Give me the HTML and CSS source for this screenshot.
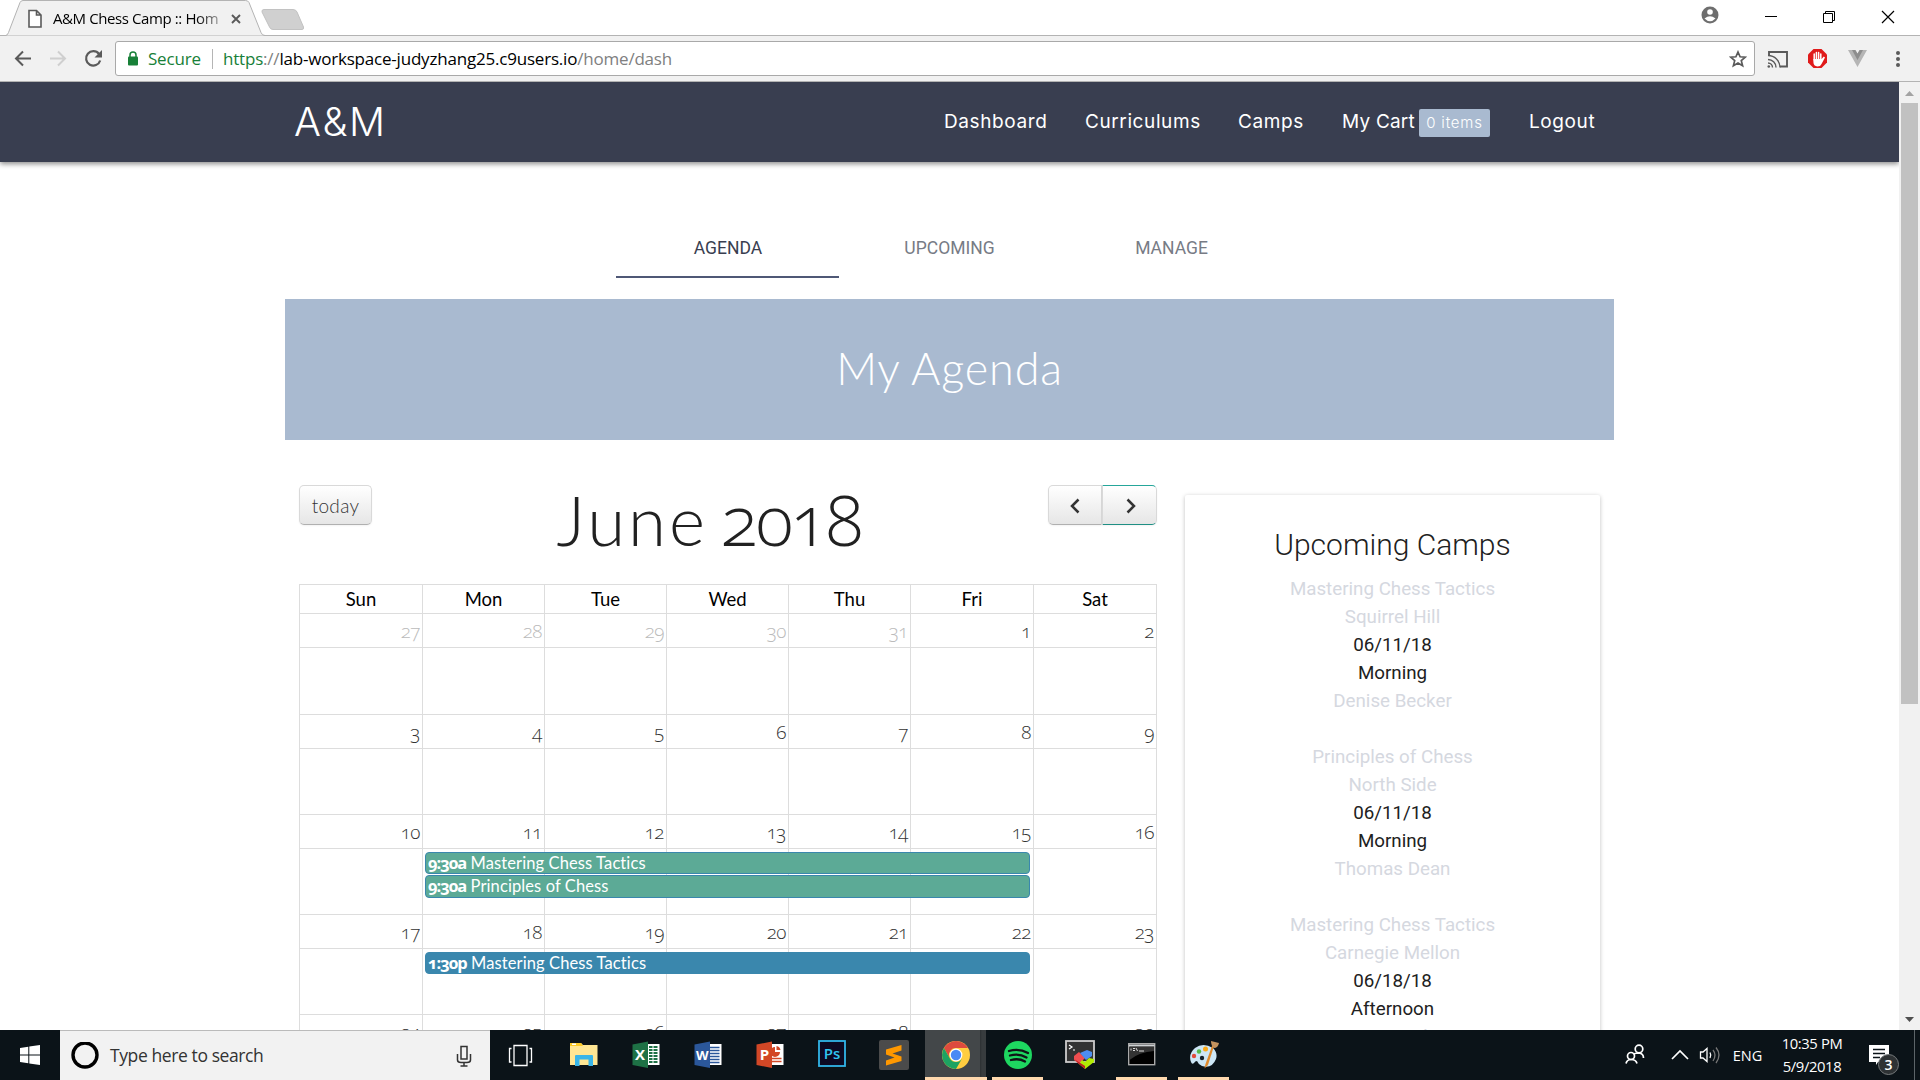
FILE: index.html
```html
<!DOCTYPE html>
<html lang="en">
<head>
<meta charset="utf-8">
<title>A&amp;M Chess Camp :: Home</title>
<link rel="stylesheet" href="styles.css">
</head>
<body>
<header class="tabstrip">
  <svg class="tabs-art" width="320" height="36" viewBox="0 0 320 36">
    <path d="M0 35.5H5.500Q7.500 35.500 8.500 32.500L20 2.500Q21 .5 23 .5H245.500Q248 .5 249 2.500L261 32.500Q262 35.500 265 35.500H320" fill="#f1f1f1" stroke="#b3b3b3"/>
    <path d="M264 9.500H293Q296 9.500 297 12L303.500 27Q304 29.500 302 29.500H273Q270.500 29.500 269.500 27L262 12Q261.500 9.500 264 9.500Z" fill="#d0d0d0" stroke="#c2c2c2"/>
    <path d="M29 10.500H36.500L41 15V27H29ZM36.500 10.500V15H41" fill="#fff" stroke="#5a5a5a" stroke-width="1.600"/>
    <path d="M232 15L240 23M240 15L232 23" stroke="#5a5a5a" stroke-width="1.900"/>
  </svg>
  <span class="tab-title">A&amp;M Chess Camp :: Hom</span>
  <svg class="window-buttons" width="220" height="35" viewBox="0 0 220 35">
    <circle cx="10" cy="15" r="8.500" fill="#6e6e6e"/><circle cx="10" cy="12" r="2.800" fill="#fff"/><path d="M4.500 18.500Q10 14 15.500 18.500Q10 24 4.500 18.500Z" fill="#fff"/>
    <path d="M65 16.500H77" stroke="#000"/>
    <path d="M123.500 13.500H132.500V22.500H123.500ZM125.500 13.500V11.500H134.500V20.500H132.500" fill="none" stroke="#000"/>
    <path d="M182 11L194 23M194 11L182 23" stroke="#000" stroke-width="1.200"/>
  </svg>
</header>
<div class="toolbar">
  <svg class="nav-icons" width="115" height="45" viewBox="0 0 115 45">
    <path d="M31 22.500H16M23 15.500L16 22.500L23 29.500" fill="none" stroke="#5a5a5a" stroke-width="2"/>
    <path d="M50 22.500H65M58 15.500L65 22.500L58 29.500" fill="none" stroke="#cfcfcf" stroke-width="2"/>
    <path d="M99 18A7.200 7.200 0 1 0 100.200 24.500" fill="none" stroke="#5a5a5a" stroke-width="2.200"/><path d="M102 14V21.500H94.500Z" fill="#5a5a5a"/>
  </svg>
  <div class="address">
    <svg width="12" height="15" viewBox="0 0 12 15"><rect x="1" y="5.500" width="10" height="9" rx="1" fill="#188038"/><path d="M3 7V4A3 3 0 0 1 9 4V7" fill="none" stroke="#188038" stroke-width="1.500"/></svg>
    <span class="secure">Secure</span><span class="sep"></span>
    <span class="url"><span class="scheme">https</span>://<span class="host">lab-workspace-judyzhang25.c9users.io</span>/home/dash</span>
    <svg class="star" width="18" height="18" viewBox="0 0 18 18"><path d="M9 2L11.100 6.800L16.300 7.200L12.300 10.600L13.600 15.800L9 13L4.400 15.800L5.700 10.600L1.700 7.200L6.900 6.800Z" fill="none" stroke="#5a5a5a" stroke-width="1.700"/></svg>
  </div>
  <svg class="extensions" width="165" height="45" viewBox="1755 36 165 45">
    <path d="M1769 56V52H1787V66.500H1780" fill="none" stroke="#5a5a5a" stroke-width="1.900"/>
    <path d="M1768 59.500A8 8 0 0 1 1776 67.500M1768 63A4.500 4.500 0 0 1 1772.500 67.500M1768 55.500A12 12 0 0 1 1780 67.500" fill="none" stroke="#5a5a5a" stroke-width="1.400"/><circle cx="1768.800" cy="66.500" r="1.300" fill="#5a5a5a"/>
    <path d="M1813.500 49H1821.500L1827 54.500V62.500L1821.500 68H1813.500L1808 62.500V54.500Z" fill="#e01b1b"/>
    <path d="M1814.200 60V54M1816.400 60V52.500M1818.600 60V52.500M1820.800 60V54" stroke="#fff" stroke-width="1.500" stroke-linecap="round"/><path d="M1813.400 59H1821.600L1823.800 56.500L1825 57.500L1821.500 64Q1820.500 66.500 1817.500 66.500Q1813.400 66 1813.400 62Z" fill="#fff"/>
    <path d="M1848 50H1854L1857.500 56L1861 50H1867L1857.500 67Z" fill="#b5b5b5"/><path d="M1852 50H1855.500L1857.500 53.500L1859.500 50H1863L1857.500 60Z" fill="#8d8d8d"/>
    <circle cx="1898" cy="53" r="2" fill="#5a5a5a"/><circle cx="1898" cy="59" r="2" fill="#5a5a5a"/><circle cx="1898" cy="65" r="2" fill="#5a5a5a"/>
  </svg>
</div>
<div class="viewport">
  <div class="page">
    <nav class="navbar">
      <a class="brand">A&amp;M</a>
      <div class="links"><a class="l1">Dashboard</a><a class="l2">Curriculums</a><a class="l3">Camps</a><a class="l4">My Cart</a><span class="badge">0 items</span><a class="l5">Logout</a></div>
    </nav>
    <div class="tabs"><a class="active">AGENDA</a><a>UPCOMING</a><a>MANAGE</a></div>
    <h2 class="banner">My Agenda</h2>
    <main class="main">
      <section class="calendar">
        <div class="cal-head">
          <button class="btn today">today</button>
          <h1>June <span class="year">2018</span></h1>
          <div class="pager">
            <button class="btn prev"><svg width="12" height="16" viewBox="0 0 12 16"><path d="M9.500 1.500L3 8L9.500 14.500" fill="none" stroke="#333" stroke-width="2.500"/></svg></button><button class="btn next"><svg width="12" height="16" viewBox="0 0 12 16"><path d="M2.500 1.500L9 8L2.500 14.500" fill="none" stroke="#333" stroke-width="2.500"/></svg></button>
          </div>
        </div>
        <div class="grid">
          <div class="days"><b>Sun</b><b>Mon</b><b>Tue</b><b>Wed</b><b>Thu</b><b>Fri</b><b>Sat</b></div>
          <div class="week first"><i class="out">27</i><i class="out">28</i><i class="out">29</i><i class="out">30</i><i class="out">31</i><i>1</i><i>2</i><s></s><s></s><s></s><s></s><s></s><s></s><s></s></div>
          <div class="week"><i>3</i><i>4</i><i>5</i><i>6</i><i>7</i><i>8</i><i>9</i><s></s><s></s><s></s><s></s><s></s><s></s><s></s></div>
          <div class="week"><i>10</i><i>11</i><i>12</i><i>13</i><i>14</i><i>15</i><i>16</i><s></s><s></s><s></s><s></s><s></s><s></s><s></s>
            <div class="events"><p class="green"><b>9:30a</b> Mastering Chess Tactics</p><p class="green"><b>9:30a</b> Principles of Chess</p></div></div>
          <div class="week"><i>17</i><i>18</i><i>19</i><i>20</i><i>21</i><i>22</i><i>23</i><s></s><s></s><s></s><s></s><s></s><s></s><s></s>
            <div class="events"><p><b>1:30p</b> Mastering Chess Tactics</p></div></div>
          <div class="week"><i>24</i><i>25</i><i>26</i><i>27</i><i>28</i><i>29</i><i>30</i><s></s><s></s><s></s><s></s><s></s><s></s><s></s></div>
        </div>
      </section>
      <aside class="card">
        <h3>Upcoming Camps</h3>
        <div class="camp"><a>Mastering Chess Tactics</a><a>Squirrel Hill</a><span>06/11/18</span><span>Morning</span><a>Denise Becker</a></div>
        <div class="camp"><a>Principles of Chess</a><a>North Side</a><span>06/11/18</span><span>Morning</span><a>Thomas Dean</a></div>
        <div class="camp"><a>Mastering Chess Tactics</a><a>Carnegie Mellon</a><span>06/18/18</span><span>Afternoon</span><a>Jason Becker</a></div>
      </aside>
    </main>
  </div>
  <div class="scrollbar">
    <svg width="21" height="21" viewBox="0 0 21 21"><path d="M6 14L10.500 9L15 14Z" fill="#a3a3a3"/></svg>
    <div class="thumb"></div>
    <svg width="21" height="21" viewBox="0 0 21 21"><path d="M6 8L10.500 13L15 8Z" fill="#505050"/></svg>
  </div>
</div>
<footer class="taskbar">
  <div class="start"><svg width="22" height="22" viewBox="0 0 22 22"><path d="M1 4L9.300 2.800V10.500H1ZM10.300 2.600L21 1V10.500H10.300ZM1 11.500H9.300V19.200L1 18ZM10.300 11.500H21V21L10.300 19.400Z" fill="#fff"/></svg></div>
  <div class="search">
    <svg width="28" height="28" viewBox="0 0 28 28"><circle cx="14" cy="13" r="12" fill="none" stroke="#000" stroke-width="3.400"/></svg>
    <span>Type here to search</span>
    <svg width="16" height="22" viewBox="0 0 16 22"><path d="M5 1.500H11V14H5ZM1.500 9V15Q1.500 17.500 5 17.500H11Q14.500 17.500 14.500 15V9M8 17.500V21M4.500 21H11.500" fill="none" stroke="#333" stroke-width="1.500"/></svg>
  </div>
  <div class="apps">
    <div class="app"><svg width="30" height="30" viewBox="1.500 0 30 30"><path d="M8.500 5.500H21.500V25.500H8.500ZM6 8.500H4V22H6M24 8.500H26V22H24" fill="none" stroke="#fff" stroke-width="1.300"/></svg></div>
    <div class="app"><svg width="30" height="30" viewBox="0 0 30 30"><path d="M1 3H12L14 5H28.500V25H1Z" fill="#ffe693"/><path d="M1 3H12L14 6H1Z" fill="#fbc926"/><path d="M3 3.500H7V5H3Z" fill="#fff"/><path d="M6 26V16Q6 15 7 15H23Q24 15 24 16V26H19.500V19.500H10.500V26Z" fill="#39b5e8"/></svg></div>
    <div class="app"><svg width="30" height="30" viewBox="0 0 30 30"><path d="M16 4H28.500V25H16Z" fill="#fff"/><path d="M18 7H26.500M18 10H26.500M18 13H26.500M18 16H26.500M18 19H26.500M18 22H26.500" stroke="#1e7145" stroke-width="1.800"/><path d="M22 6V23" stroke="#fff"/><path d="M1.500 4.500L17 1.500V28L1.500 25Z" fill="#1e7145"/><text x="9" y="20" class="office">X</text></svg></div>
    <div class="app"><svg width="30" height="30" viewBox="0 0 30 30"><path d="M16 4H28.500V25H16Z" fill="#fff"/><path d="M17 7.500H26.500M17 10.500H26.500M17 13.500H26.500M17 16.500H26.500M17 19.500H26.500M17 22.500H26.500" stroke="#2b579a" stroke-width="1.500"/><path d="M1.500 4.500L17 1.500V28L1.500 25Z" fill="#2b579a"/><text x="9.300" y="19.500" class="office word">W</text></svg></div>
    <div class="app"><svg width="30" height="30" viewBox="0 0 30 30"><path d="M16 4H28.500V25H16Z" fill="#fff"/><path d="M17 18.500H26.500M17 21.500H26.500" stroke="#d24726" stroke-width="1.500"/><path d="M20 7V12H25A5 5 0 1 1 20 7Z" fill="#d24726"/><path d="M21.500 6A5 5 0 0 1 25.500 10H21.500Z" fill="#d24726"/><path d="M1.500 4.500L17 1.500V28L1.500 25Z" fill="#d24726"/><text x="9.500" y="20" class="office">P</text></svg></div>
    <div class="app"><svg width="30" height="30" viewBox="0 0 30 30"><rect x="2" y="1" width="26" height="25" fill="#0c0a22" stroke="#31b5e8" stroke-width="1.800"/><text x="15" y="18.500" class="ps">Ps</text></svg></div>
    <div class="app"><svg width="30" height="30" viewBox="0 0 30 30"><rect width="30" height="30" rx="2" fill="#4b4b4b"/><path d="M7 9.500L22.500 5V10.500L13.500 13.500L22.500 16.500V21L7 25.500V20.500L15.500 17.500L7 14.500Z" fill="#ff9800"/></svg></div>
    <div class="app active"><svg width="30" height="30" viewBox="-15 -15 30 30"><circle r="14" fill="#ffcd40"/><path d="M-12.100 -7A14 14 0 0 1 12.100 -7H0A7 7 0 0 0 -6.100 3.500Z" fill="#dd4b3e"/><path d="M-12.100 -7A14 14 0 0 0 0 14L6.100 3.500A7 7 0 0 1 -6.100 3.500Z" fill="#1da362"/><circle r="6.400" fill="#fff"/><circle r="5.200" fill="#4a8af4"/></svg></div>
    <div class="app open"><svg width="30" height="30" viewBox="-15 -15 30 30"><circle r="14" fill="#1ed760"/><path d="M-9 -4Q1 -7 10 -2M-8 .5Q1 -2 8.500 2.500M-7 5Q1 3 7 6.500" fill="none" stroke="#101517" stroke-width="2.300" stroke-linecap="round"/></svg></div>
    <div class="app"><svg width="30" height="30" viewBox="0 0 30 30"><rect x="1" y="1" width="28" height="21" fill="#333" stroke="#ccc" stroke-width="1.800"/><path d="M4 5L7 7L4 9M8 10H10" fill="none" stroke="#fff" stroke-width="1.200"/><path d="M9 16L14 12L20 18L14 24L9 20Z" fill="#f04e50"/><path d="M15 13L22 10L27 12L27 16L21 20Z" fill="#4c8df0"/><path d="M14 24L17 20L20 22L24 18L29 19L29 22L20 29Z" fill="#b1ec05"/><path d="M9 19L14 24L20 29V26Z" fill="#b22"/></svg></div>
    <div class="app open"><svg width="30" height="30" viewBox="0 0 30 30"><rect x="1.700" y="3.700" width="26" height="21" fill="#000" stroke="#a9a9a9" stroke-width="1.400"/><path d="M2 5.500H27.500" stroke="#cfd2d4" stroke-width="2"/><path d="M2.500 7H27V11Q12 12 2.500 20Z" fill="#333"/><path d="M4 8.500V10.500M6 8.500H8M6 10.500H8M9 8L10.500 11M12 11H17" stroke="#ddd" fill="none"/></svg></div>
    <div class="app open"><svg width="30" height="30" viewBox="0 0 30 30"><path d="M2 22Q-1 14 6 8Q14 2 24 8Q29 13 27 19Q23 29 13 26Q9 24 8 21Q6 21 5 23Q3 25 2 22Z" fill="#cde6f5"/><circle cx="5" cy="16" r="2.200" fill="#e24a3b"/><circle cx="10" cy="11.500" r="2.200" fill="#55b948"/><circle cx="16.500" cy="9" r="2.500" fill="#fba919"/><circle cx="13" cy="18" r="2.200" fill="#13202a"/><path d="M25 6L19 25L15.500 28.500L16.500 24L23 6Z" fill="#e08a2c"/><path d="M22 1L30 3Q29 8 25 8Q22 6 22 1Z" fill="#c4935f"/></svg></div>
  </div>
  <div class="tray">
    <svg width="320" height="50" viewBox="1600 1030 320 50">
      <g fill="none" stroke="#fff" stroke-width="1.700"><circle cx="1639" cy="1049" r="3.800"/><path d="M1633.500 1054Q1636 1053 1639 1053Q1643.500 1053.500 1643.500 1058"/><circle cx="1631" cy="1056" r="3.500"/><path d="M1626 1063.500Q1627 1059.500 1631 1059.500Q1636 1059.500 1637 1063.500"/>
      <path d="M1672 1059L1680 1051L1688 1059"/><path d="M1700.500 1052H1703L1707 1048.500V1061.500L1703 1058H1700.500Z" stroke-width="1.300"/><path d="M1710 1052.500Q1711.500 1055 1710 1058" stroke-width="1.300"/><path d="M1713 1050Q1717 1055 1713 1061M1716 1047.500Q1722 1055 1716 1063" stroke="#777" stroke-width="1.300"/></g>
      <path d="M1869 1045H1889V1062H1878L1876 1065V1062H1869Z" fill="#fff"/><path d="M1873 1049.500H1885M1873 1053.500H1885M1873 1057.500H1880" stroke="#0b1318" stroke-width="1.400"/>
      <circle cx="1888.500" cy="1064.500" r="10" fill="#2e3234" stroke="#767a7c"/><path d="M1914.500 1030V1080" stroke="#5c6468"/>
      <text x="1747.500" y="1061" class="lang">ENG</text><text x="1812" y="1049" class="clock">10:35 PM</text><text x="1812" y="1072" class="clock">5/9/2018</text><text x="1888.500" y="1069.500" class="count">3</text>
    </svg>
  </div>
</footer>
</body>
</html>
```
FILE: styles.css
```css
* { box-sizing: border-box; margin: 0; padding: 0; }
body { width: 1920px; height: 1080px; overflow: hidden; background: #fff; color: #212121; display: flex; flex-direction: column; font-family: Roboto, sans-serif; }
svg { display: block; flex: none; }

.tabstrip { height: 36px; display: flex; background: linear-gradient(#b3b3b3, #b3b3b3) 0 35px / 100% 1px no-repeat #fff; position: relative; }
.tab-title { position: absolute; left: 53px; top: 7px; width: 168px; overflow: hidden; white-space: nowrap; font: 15px/22px "Open Sans", sans-serif; letter-spacing: -.4px; color: #000; -webkit-mask-image: linear-gradient(90deg, #000 85%, rgba(0,0,0,.3)); mask-image: linear-gradient(90deg, #000 85%, rgba(0,0,0,.3)); }
.window-buttons { margin-left: auto; }
.toolbar { height: 46px; background: #f1f1f1; border-bottom: 1px solid #b3b3b3; display: flex; }
.address { width: 1640px; height: 35px; margin-top: 5px; border: 1px solid #a9a9a9; border-radius: 3px; background: #fff; display: flex; align-items: center; padding: 0 7px 0 11px; font: 17px/33px "Open Sans", sans-serif; white-space: nowrap; }
.secure { margin-left: 9px; width: 64px; color: #188038; letter-spacing: -.2px; }
.sep { width: 1px; height: 20px; background: #b5b5b5; margin-right: 10px; }
.url { color: #808080; letter-spacing: -.2px; }
.scheme { color: #188038; }
.host { color: #000; }
.star { margin-left: auto; }

.viewport { height: 948px; display: flex; }
.page { width: 1899px; height: 948px; overflow: hidden; }
.navbar { height: 80px; background: #393e50; box-shadow: 0 2px 5px rgba(0,0,0,.45); padding: 0 285px 0 295px; display: flex; align-items: center; color: #fff; font-family: Inter, sans-serif; }
.brand { font-size: 40px; font-weight: 300; line-height: 82px; letter-spacing: 1.6px; margin-left: -1px; }
.links { margin-left: auto; display: flex; align-items: center; font-size: 19px; line-height: 22px; margin-right: 18px; padding-bottom: 1px; white-space: nowrap; letter-spacing: .6px; }
.l1 { width: 141px; } .l2 { width: 153px; } .l3 { width: 104px; } .l4 { width: 77px; letter-spacing: .2px; } .l5 { width: 67px; }
.badge { width: 71px; height: 28px; margin: 2px 39px 0 0; background: #a9bad0; border-radius: 2px; font-size: 15px; line-height: 28px; text-align: center; font-weight: 300; letter-spacing: .8px; }
.tabs { display: flex; justify-content: center; margin-top: 56px; height: 60px; }
.tabs a { width: 222px; text-align: center; font-size: 17.500px; line-height: 60px; color: #777b85; }
.tabs .active { width: 223px; margin-left: -1px; padding-left: 2px; color: #393e50; border-bottom: 2px solid #4f5876; }
.banner { width: 1329px; height: 141px; margin: 21px 0 0 285px; background: #a9bad0; color: #fff; text-align: center; font: 300 45px/139px Lato, sans-serif; letter-spacing: .8px; }
.main { display: flex; padding: 45px 0 0 299px; gap: 28px; }
.calendar { width: 858px; font-family: Lato, sans-serif; }
.cal-head { display: flex; justify-content: space-between; height: 99px; }
.cal-head h1 { width: 306px; font-weight: 300; font-size: 69px; line-height: 68px; color: #212121; letter-spacing: 3px; white-space: nowrap; margin-right: 1px; }
.year { font-family: "Open Sans", sans-serif; font-size: 70px; font-variant-numeric: oldstyle-nums; letter-spacing: -2.500px; margin-left: -9px; }
.btn { height: 40px; border: 1px solid; border-color: #d9d9d9 #d9d9d9 #b0b0b0; background: linear-gradient(#fff, #e6e6e6); box-shadow: inset 0 1px 0 rgba(255,255,255,.2), 0 1px 2px rgba(0,0,0,.05); color: #333; display: flex; align-items: center; justify-content: center; font: 300 19px Lato, sans-serif; letter-spacing: .3px; padding-top: 1px; }
.today { width: 73px; border-radius: 5px; }
.pager { display: flex; }
.prev { width: 54px; border-radius: 5px 0 0 5px; }
.next { width: 55px; border-radius: 0 5px 5px 0; border-top-color: #26a69a; border-bottom-color: #1f8f84; padding-left: 2px; }
.grid { border: solid #ddd; border-width: 1px 0 0 1px; }
.days, .week { display: grid; grid-template-columns: 123px repeat(4, 122px) 123px 1fr; }
.days { height: 28px; }
.days b { border-right: 1px solid #ddd; font-weight: 400; font-size: 18.500px; line-height: 29px; text-align: center; color: #000; }
.week { grid-template-rows: 34px 66px; height: 100px; }
.first { grid-template-rows: 34px 67px; height: 101px; }
.week i, .week s { border: solid #ddd; border-width: 1px 1px 0 0; text-decoration: none; }
.week i { font: 300 19px/34px "Open Sans", sans-serif; font-variant-numeric: oldstyle-nums; color: #333; text-align: right; padding-right: 2px; letter-spacing: -.5px; height: 34px; }
.week .out { color: #bbb; }
.week s { grid-row: 2; }
.week s:nth-of-type(1) { grid-column: 1; }
.week s:nth-of-type(2) { grid-column: 2; }
.week s:nth-of-type(3) { grid-column: 3; }
.week s:nth-of-type(4) { grid-column: 4; }
.week s:nth-of-type(5) { grid-column: 5; }
.week s:nth-of-type(6) { grid-column: 6; }
.week s:nth-of-type(7) { grid-column: 7; }
.events { grid-column: 2 / 7; grid-row: 2; display: flex; flex-direction: column; gap: 1px; padding: 4px 4px 0 2px; z-index: 1; }
.events p { height: 22px; border: 1px solid #3a87ad; border-radius: 4px; background: #3a87ad; color: #fff; font-size: 16.500px; line-height: 19px; padding-left: 2px; white-space: nowrap; letter-spacing: .1px; }
.events .green { background: #5caa96; }
.events .green + .green { height: 23px; line-height: 20px; }
.events b { font-weight: 700; font-family: "Open Sans", sans-serif; font-size: 16.500px; font-variant-numeric: oldstyle-nums; letter-spacing: -1px; }

.card { width: 415px; height: 620px; margin-top: 10px; border-radius: 2px; box-shadow: 0 1px 4px rgba(0,0,0,.25); padding-top: 27px; text-align: center; font-size: 18.750px; line-height: 28px; }
.card h3 { font-weight: 300; font-size: 30px; line-height: 46px; margin-bottom: 7px; }
.camp { height: 168px; }
.camp a, .camp span { display: block; height: 28px; }
.camp a { color: #d5d8df; }
.scrollbar { width: 21px; background: #f1f1f1; display: flex; flex-direction: column; }
.thumb { width: 17px; height: 601px; margin: 0 2px auto; background: #c1c1c1; }

.taskbar { height: 50px; background: #0b1318; display: flex; }
.start { width: 60px; display: flex; align-items: center; justify-content: center; }
.search { width: 430px; background: #f2f2f2; border-top: 1px solid #bbb; display: flex; align-items: center; padding: 0 18px 0 11px; }
.search span { margin: -2px auto 0 11px; font: 17.500px "Open Sans", sans-serif; color: #333; letter-spacing: -.4px; white-space: nowrap; }
.apps { display: flex; margin-left: 1px; }
.app { width: 62px; padding: 10px 16px; }
.app.active { background: linear-gradient(90deg, #434749 55px, #2c3032 55px, #383c3e 57px) 0 0 / 61px 50px no-repeat; box-shadow: inset 0 -3px #ffd9ae; }
.app.open { background: linear-gradient(#ffd9ae, #ffd9ae) 5px 47px / 51px 3px no-repeat; }
.tray { margin-left: auto; }
.tray text { font-family: "Open Sans", sans-serif; fill: #fff; text-anchor: middle; }
.tray .lang { font-size: 14.500px; }
.tray .clock { font-size: 14.800px; letter-spacing: -.4px; }
.tray .count { font-size: 14px; font-weight: 600; }
.office { font: 700 15px "Open Sans", sans-serif; fill: #fff; text-anchor: middle; }
.office.word { font-size: 13px; }
.ps { font: 600 15px "Open Sans", sans-serif; fill: #31c5f0; text-anchor: middle; }
```
